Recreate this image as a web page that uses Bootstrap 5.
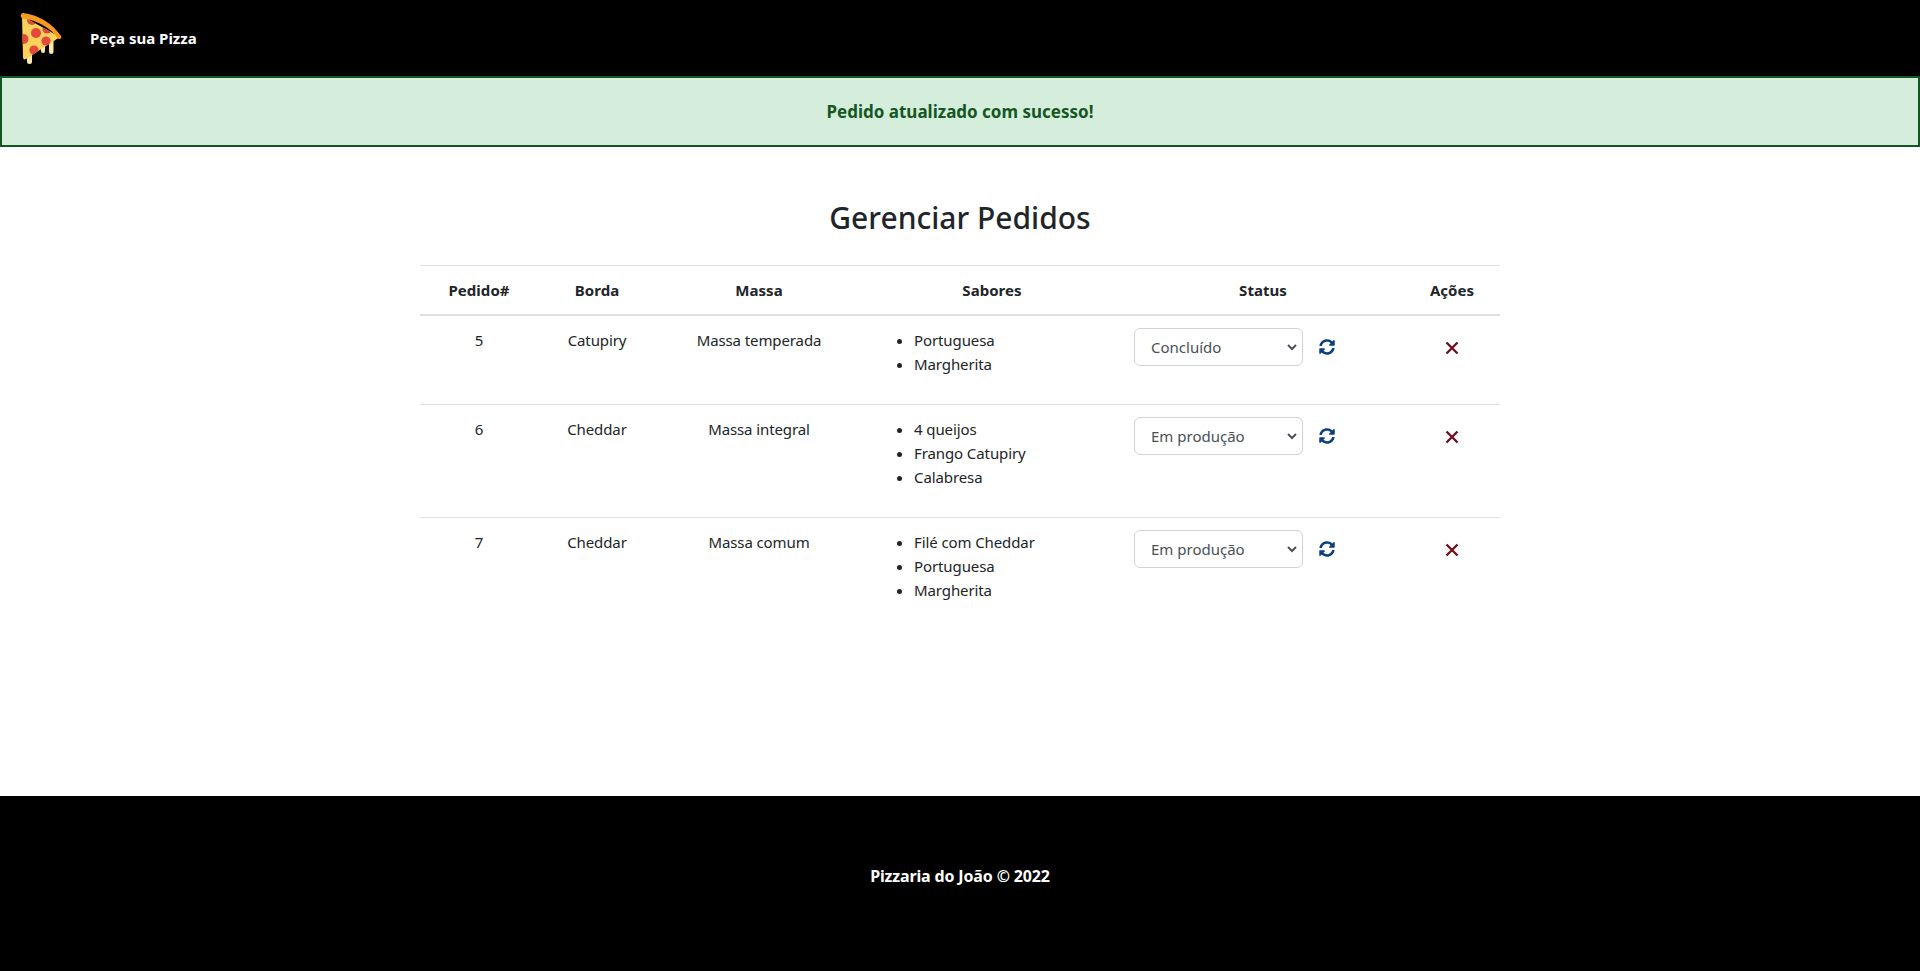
<!DOCTYPE html>
<html lang="pt-BR">
<head>
<meta charset="utf-8">
<title>Peça sua Pizza</title>
<link href="https://cdn.jsdelivr.net/npm/bootstrap@5.3.0/dist/css/bootstrap.min.css" rel="stylesheet">
<style>
html,body{height:100%}
body{font-family:"Noto Sans","Open Sans","Liberation Sans",sans-serif;color:#212529;font-size:16px;letter-spacing:-.1px}
.page-wrap{min-height:971px;display:flex;flex-direction:column}
.top-bar{background:#000;height:76px;padding:0 0 0 20px}
.top-bar .navbar-brand{padding:0;margin:0 26px 0 0;display:flex}
.top-bar .nav-link{color:#fff;font-weight:700;font-size:15px;padding:0;letter-spacing:0}
.flash{background:#d5eddb;border:2px solid #155724;color:#155724;height:71px;border-radius:0;margin:0;padding:0;font-weight:700;font-size:17px;letter-spacing:0;display:flex;align-items:center;justify-content:center}
.main-area{height:649px;padding-top:52px}
.main-area h2{font-size:30px;font-weight:500;line-height:38px;margin:0 0 28px;text-align:center;letter-spacing:0}
.orders{width:1080px;margin:0 auto;table-layout:fixed}
.orders th,.orders td{padding:12px}
.orders thead th{text-align:center;line-height:24px;border-top:1px solid #dee2e6;border-bottom:2px solid #dee2e6;font-weight:700;font-size:15px;letter-spacing:.05px}
.orders td{text-align:center;font-size:15px;line-height:24px}
.orders ul{text-align:left;padding-left:40px;margin:0 0 16px}
.status-cell{display:flex;align-items:flex-start;gap:16px;text-align:left}
.status-cell .form-select{width:169px;height:38px;font-size:15px;color:#495057;border-color:#ced4da;padding:1px 24px 0 16px;background-size:10px 10px;background-position:right 5px center;background-image:url("data:image/svg+xml,%3csvg xmlns='http://www.w3.org/2000/svg' viewBox='0 0 10 10'%3e%3cpath fill='none' stroke='%23495057' stroke-width='2' d='M1 3l4 4 4-4'/%3e%3c/svg%3e")}
.icon-act{padding:0;border:0;background:none;display:block;line-height:0}
.icon-sync{margin-top:11px;color:#0b3f80}
.icon-del{margin:13px auto 0;color:#6d1220}
.site-foot{background:#000;color:#fff;height:175px;padding-bottom:15px;font-weight:700;font-size:16px;letter-spacing:-.15px}
</style>
</head>
<body>
<div class="page-wrap">
<nav class="navbar top-bar">
  <div class="d-flex align-items-center">
  <a class="navbar-brand" href="#">
    <svg width="44" height="52" viewBox="0 0 44 52" aria-hidden="true">
      <defs><clipPath id="sl"><path d="M2 4 L40 25 L6 47 C4 48 3 47 3 45 Z"/></clipPath></defs>
      <rect x="7" y="38" width="5" height="14" rx="2.5" fill="#fde9a6"/>
      <rect x="21" y="28" width="4" height="13" rx="2" fill="#fde9a6"/>
      <rect x="29" y="24" width="4.5" height="18" rx="2.2" fill="#fde9a6"/>
      <path d="M2 4 L40 25 L6 47 C4 48 3 47 3 45 Z" fill="#fcd25c"/>
      <g clip-path="url(#sl)" fill="#e5473b">
        <circle cx="12" cy="8" r="5"/>
        <circle cx="16" cy="21" r="5"/>
        <circle cx="27" cy="17" r="4.6"/>
        <circle cx="3.5" cy="27" r="5"/>
        <circle cx="26" cy="29" r="4.6"/>
        <circle cx="14" cy="38" r="4.6"/>
      </g>
      <path d="M3 1 C18 2.500 33 12 41 24 C42.500 26.500 39.500 28 38 26.500 C30 15 17 8.500 3 6.500 C0 6 0 1.500 3 1Z" fill="#f79a1f"/>
    </svg>
  </a>
  <a class="nav-link" href="#">Peça sua Pizza</a>
  </div>
</nav>
<div class="flash" role="alert">Pedido atualizado com sucesso!</div>
<main class="main-area">
  <h2>Gerenciar Pedidos</h2>
  <table class="orders table mb-0">
    <colgroup><col style="width:118px"><col style="width:118px"><col style="width:206px"><col style="width:260px"><col style="width:282px"><col style="width:96px"></colgroup>
    <thead><tr><th>Pedido#</th><th>Borda</th><th>Massa</th><th>Sabores</th><th>Status</th><th>Ações</th></tr></thead>
    <tbody>
      <tr><td>5</td><td>Catupiry</td><td>Massa temperada</td><td><ul><li>Portuguesa</li><li>Margherita</li></ul></td>
        <td><div class="status-cell"><select class="form-select"><option>Concluído</option></select>
        <button class="icon-act icon-sync" aria-label="Atualizar"><svg width="16" height="16" viewBox="0 0 512 512"><path fill="currentColor" d="M370.72 133.28C339.458 104.008 298.888 87.962 255.848 88c-77.458.068-144.328 53.178-162.791 126.85-1.344 5.363-6.122 9.15-11.651 9.15H24.103c-7.498 0-13.194-6.807-11.807-14.176C33.933 94.924 134.813 8 256 8c66.448 0 126.791 26.136 171.315 68.685L463.03 40.97C478.149 25.851 504 36.559 504 57.941V192c0 13.255-10.745 24-24 24H345.941c-21.382 0-32.09-25.851-16.971-40.971l41.75-41.749zM32 296h134.059c21.382 0 32.09 25.851 16.971 40.971l-41.75 41.75c31.262 29.273 71.835 45.319 114.876 45.28 77.418-.07 144.315-53.144 162.787-126.849 1.344-5.363 6.122-9.15 11.651-9.15h57.304c7.498 0 13.194 6.807 11.807 14.176C478.067 417.076 377.187 504 256 504c-66.448 0-126.791-26.136-171.315-68.685L48.97 471.03C33.851 486.149 8 475.441 8 454.059V320c0-13.255 10.745-24 24-24z"/></svg></button></div></td>
        <td><button class="icon-act icon-del" aria-label="Excluir"><svg width="14" height="14" viewBox="0 0 14 14"><path d="M1.5 1.5 12.5 12.5M12.5 1.5 1.5 12.5" stroke="currentColor" stroke-width="2.4" fill="none"/></svg></button></td></tr>
      <tr><td>6</td><td>Cheddar</td><td>Massa integral</td><td><ul><li>4 queijos</li><li>Frango Catupiry</li><li>Calabresa</li></ul></td>
        <td><div class="status-cell"><select class="form-select"><option>Em produção</option></select>
        <button class="icon-act icon-sync" aria-label="Atualizar"><svg width="16" height="16" viewBox="0 0 512 512"><path fill="currentColor" d="M370.72 133.28C339.458 104.008 298.888 87.962 255.848 88c-77.458.068-144.328 53.178-162.791 126.85-1.344 5.363-6.122 9.15-11.651 9.15H24.103c-7.498 0-13.194-6.807-11.807-14.176C33.933 94.924 134.813 8 256 8c66.448 0 126.791 26.136 171.315 68.685L463.03 40.97C478.149 25.851 504 36.559 504 57.941V192c0 13.255-10.745 24-24 24H345.941c-21.382 0-32.09-25.851-16.971-40.971l41.75-41.749zM32 296h134.059c21.382 0 32.09 25.851 16.971 40.971l-41.75 41.75c31.262 29.273 71.835 45.319 114.876 45.28 77.418-.07 144.315-53.144 162.787-126.849 1.344-5.363 6.122-9.15 11.651-9.15h57.304c7.498 0 13.194 6.807 11.807 14.176C478.067 417.076 377.187 504 256 504c-66.448 0-126.791-26.136-171.315-68.685L48.97 471.03C33.851 486.149 8 475.441 8 454.059V320c0-13.255 10.745-24 24-24z"/></svg></button></div></td>
        <td><button class="icon-act icon-del" aria-label="Excluir"><svg width="14" height="14" viewBox="0 0 14 14"><path d="M1.5 1.5 12.5 12.5M12.5 1.5 1.5 12.5" stroke="currentColor" stroke-width="2.4" fill="none"/></svg></button></td></tr>
      <tr class="border-0"><td class="border-0">7</td><td class="border-0">Cheddar</td><td class="border-0">Massa comum</td><td class="border-0"><ul><li>Filé com Cheddar</li><li>Portuguesa</li><li>Margherita</li></ul></td>
        <td class="border-0"><div class="status-cell"><select class="form-select"><option>Em produção</option></select>
        <button class="icon-act icon-sync" aria-label="Atualizar"><svg width="16" height="16" viewBox="0 0 512 512"><path fill="currentColor" d="M370.72 133.28C339.458 104.008 298.888 87.962 255.848 88c-77.458.068-144.328 53.178-162.791 126.85-1.344 5.363-6.122 9.15-11.651 9.15H24.103c-7.498 0-13.194-6.807-11.807-14.176C33.933 94.924 134.813 8 256 8c66.448 0 126.791 26.136 171.315 68.685L463.03 40.97C478.149 25.851 504 36.559 504 57.941V192c0 13.255-10.745 24-24 24H345.941c-21.382 0-32.09-25.851-16.971-40.971l41.75-41.749zM32 296h134.059c21.382 0 32.09 25.851 16.971 40.971l-41.75 41.75c31.262 29.273 71.835 45.319 114.876 45.28 77.418-.07 144.315-53.144 162.787-126.849 1.344-5.363 6.122-9.15 11.651-9.15h57.304c7.498 0 13.194 6.807 11.807 14.176C478.067 417.076 377.187 504 256 504c-66.448 0-126.791-26.136-171.315-68.685L48.97 471.03C33.851 486.149 8 475.441 8 454.059V320c0-13.255 10.745-24 24-24z"/></svg></button></div></td>
        <td class="border-0"><button class="icon-act icon-del" aria-label="Excluir"><svg width="14" height="14" viewBox="0 0 14 14"><path d="M1.5 1.5 12.5 12.5M12.5 1.5 1.5 12.5" stroke="currentColor" stroke-width="2.4" fill="none"/></svg></button></td></tr>
    </tbody>
  </table>
</main>
<footer class="site-foot d-flex align-items-center justify-content-center">Pizzaria do João © 2022</footer>
</div>
</body>
</html>
